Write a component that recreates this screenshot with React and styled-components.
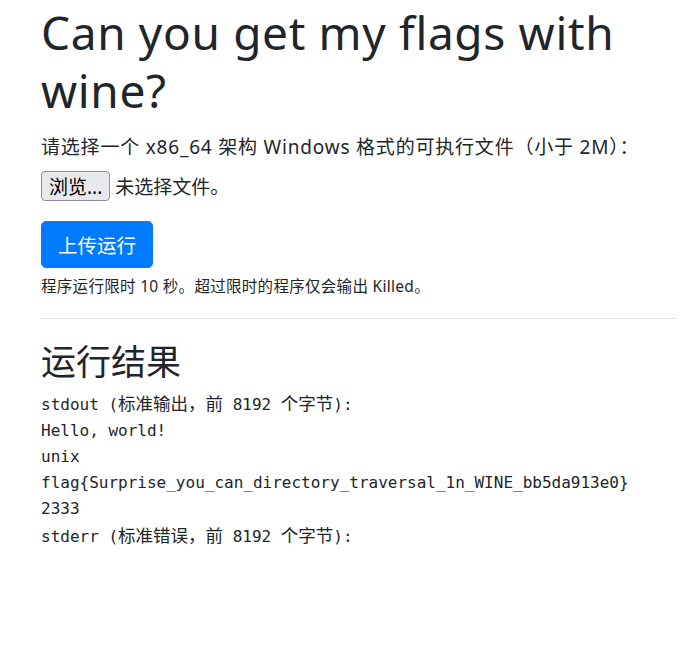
import styled, { createGlobalStyle } from 'styled-components';

const GlobalStyle = createGlobalStyle`
  body {
    margin: 0;
    background: #fff;
    color: #212529;
    font-family: "Noto Sans", "Noto Sans CJK SC", sans-serif;
  }
`;

const Container = styled.div`
  padding: 3px 15px 40px 41px;
`;

const Title = styled.h1`
  margin: 0 0 13px;
  font-size: 46px;
  font-weight: 400;
  letter-spacing: 0.65px;
  line-height: 58px;
`;

const Label = styled.p`
  margin: 0;
  font-size: 19px;
  letter-spacing: 0.8px;
  line-height: 30px;
`;

const FileRow = styled.div`
  display: flex;
  align-items: center;
  gap: 5px;
  margin-top: 9px;
  font-size: 19px;
`;

const Browse = styled.span`
  display: inline-flex;
  align-items: center;
  height: 30px;
  box-sizing: border-box;
  padding: 0 7px;
  background: #e9e9ed;
  border: 1px solid #8f8f9d;
  border-radius: 4px;
  font-size: 19px;
  color: #000;
`;

const Submit = styled.button`
  display: block;
  margin-top: 20px;
  width: 112px;
  height: 47px;
  background: #007bff;
  color: #fff;
  border: 1px solid #007bff;
  border-radius: 5px;
  font-family: inherit;
  font-size: 19.5px;
  cursor: pointer;
`;

const Hint = styled.small`
  display: block;
  margin-top: 6px;
  font-size: 15.5px;
  letter-spacing: 0.3px;
  line-height: 24px;
`;

const Rule = styled.hr`
  margin: 20px 0 22px;
  border: 0;
  border-top: 1px solid #e3e3e3;
`;

const Heading = styled.h2`
  margin: 0 0 7px;
  font-size: 35px;
  font-weight: 400;
  line-height: 42px;
`;

const Output = styled.div`
  font-family: "DejaVu Sans Mono", "Noto Sans CJK SC", monospace;
  font-size: 16px;
  line-height: 26px;
  white-space: pre;
`;

const Cjk = styled.span`
  font-family: "Noto Sans CJK SC", sans-serif;
  font-size: 17.5px;
`;

export default function App() {
  return (
    <>
      <GlobalStyle />
      <Container>
        <Title>Can you get my flags with wine?</Title>
        <Label>请选择一个 x86_64 架构 Windows 格式的可执行文件（小于 2M）：</Label>
        <FileRow>
          <Browse>浏览...</Browse>
          <span>未选择文件。</span>
        </FileRow>
        <Submit>上传运行</Submit>
        <Hint>程序运行限时 10 秒。超过限时的程序仅会输出 Killed。</Hint>
        <Rule />
        <Heading>运行结果</Heading>
        <Output>
          <div>stdout (<Cjk>标准输出，前</Cjk> 8192 <Cjk>个字节</Cjk>):</div>
          <div>Hello, world!</div>
          <div>unix</div>
          <div>flag{'{'}Surprise_you_can_directory_traversal_1n_WINE_bb5da913e0{'}'}</div>
          <div>2333</div>
          <div>stderr (<Cjk>标准错误，前</Cjk> 8192 <Cjk>个字节</Cjk>):</div>
        </Output>
      </Container>
    </>
  );
}
